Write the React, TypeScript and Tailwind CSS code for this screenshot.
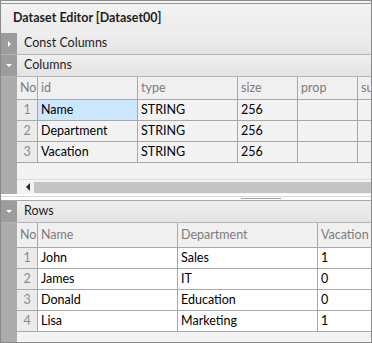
import type { FC, ReactNode } from "react";

const font = { fontFamily: 'Lato, "Noto Sans", sans-serif' };

const Band: FC<{ label: string; open: boolean }> = ({ label, open }) => (
	<div className="flex h-[22px] border-b border-[#b4b4b4]">
		<div className="flex w-[16px] shrink-0 items-center justify-center bg-[#9c9c9c]">
			{open ? (
				<div className="h-0 w-0 border-x-[3px] border-t-[3px] border-x-transparent border-t-white" />
			) : (
				<div className="h-0 w-0 border-y-[3px] border-l-[3px] border-y-transparent border-l-white" />
			)}
		</div>
		<div className="flex flex-1 items-center bg-gradient-to-b from-[#efefef] to-[#e3e3e3] pl-[7px] text-[12.5px] text-[#1e1e1e]">
			{label}
		</div>
	</div>
);

const HeadCell: FC<{ w: string; children: ReactNode }> = ({ w, children }) => (
	<div
		className={`${w} flex shrink-0 items-center overflow-hidden whitespace-nowrap border-r border-[#a8a8a8] pl-[3px] text-[12.5px] text-[#7c7c7c]`}
	>
		{children}
	</div>
);

const Cell: FC<{ w: string; bg?: string; children?: ReactNode }> = ({
	w,
	bg = "",
	children,
}) => (
	<div
		className={`${w} ${bg} flex shrink-0 items-center border-r border-[#a8a8a8] pl-[3px] text-[12.5px] text-black`}
	>
		{children}
	</div>
);

const NoCell: FC<{ n: number }> = ({ n }) => (
	<div className="flex w-[21px] shrink-0 items-center justify-center border-r border-[#a8a8a8] bg-[#ebebeb] text-[12.5px] text-[#8c8c8c]">
		{n}
	</div>
);

const columns = [
	{ id: "Name", type: "STRING", size: "256" },
	{ id: "Department", type: "STRING", size: "256" },
	{ id: "Vacation", type: "STRING", size: "256" },
];

const rows = [
	{ name: "John", dept: "Sales", vac: "1" },
	{ name: "James", dept: "IT", vac: "0" },
	{ name: "Donald", dept: "Education", vac: "0" },
	{ name: "Lisa", dept: "Marketing", vac: "1" },
];

export default function App() {
	return (
		<div
			style={font}
			className="flex h-[343px] w-[372px] flex-col overflow-hidden border border-[#8a8a8a] bg-[#f3f3f3]"
		>
			<div className="mt-[2px] h-px bg-[#e07a7a]" />
			<div className="flex h-[29px] items-center bg-gradient-to-b from-[#f3f3f3] to-[#ebebeb] pl-[12px] text-[12.5px] font-bold text-[#1e1e1e]">
				Dataset Editor [Dataset00]
			</div>
			<div className="flex flex-1 flex-col">
				<Band label="Const Columns" open={false} />
				<Band label="Columns" open />
				<div className="flex">
					<div className="w-[16px] shrink-0 bg-[#acacac]" />
					<div className="flex min-w-0 flex-1 flex-col overflow-hidden">
						<div className="flex h-[23px] border-b border-[#a8a8a8] bg-[#f0f0f0]">
							<HeadCell w="w-[21px]">No</HeadCell>
							<HeadCell w="w-[100px]">id</HeadCell>
							<HeadCell w="w-[100px]">type</HeadCell>
							<HeadCell w="w-[60px]">size</HeadCell>
							<HeadCell w="w-[60px]">prop</HeadCell>
							<HeadCell w="w-[60px]">su</HeadCell>
						</div>
						{columns.map((c, i) => (
							<div key={c.id} className="flex h-[21px] border-b border-[#a8a8a8] bg-[#f3f3f3]">
								<NoCell n={i + 1} />
								<Cell w="w-[100px]" bg={i === 0 ? "bg-[#cce8ff]" : ""}>
									{c.id}
								</Cell>
								<Cell w="w-[100px]">{c.type}</Cell>
								<Cell w="w-[60px]">{c.size}</Cell>
								<Cell w="w-[60px]" />
								<Cell w="w-[60px]" />
							</div>
						))}
						<div className="h-[17px] border-b border-[#dcdcdc]" />
						<div className="flex h-[14px] items-center">
							<div className="flex w-[17px] justify-center pl-[4px]">
								<div className="h-0 w-0 border-y-[4px] border-r-[4px] border-y-transparent border-r-[#2a2a2a]" />
							</div>
							<div className="h-[11px] flex-1 bg-[#c4c4c4]" />
						</div>
					</div>
				</div>
				<div className="relative flex h-[7px] flex-col border-b border-[#a8a8a8] bg-white">
					<div className="mt-[2px] h-px bg-[#d8d8d8]" />
					<div className="absolute left-[240px] top-[4px] h-px w-[40px] bg-[#a0a0a0]" />
				</div>
				<Band label="Rows" open />
				<div className="flex flex-1">
					<div className="w-[16px] shrink-0 bg-[#acacac]" />
					<div className="flex min-w-0 flex-1 flex-col overflow-hidden">
						<div className="flex h-[25px] border-b border-[#a8a8a8] bg-[#f0f0f0]">
							<HeadCell w="w-[21px]">No</HeadCell>
							<HeadCell w="w-[140px]">Name</HeadCell>
							<HeadCell w="w-[140px]">Department</HeadCell>
							<HeadCell w="w-[60px]">Vacation</HeadCell>
						</div>
						{rows.map((r, i) => (
							<div key={r.name} className="flex h-[21px] border-b border-[#a8a8a8] bg-white">
								<NoCell n={i + 1} />
								<Cell w="w-[140px]">{r.name}</Cell>
								<Cell w="w-[140px]">{r.dept}</Cell>
								<Cell w="w-[60px]">{r.vac}</Cell>
							</div>
						))}
					</div>
				</div>
			</div>
		</div>
	);
}
